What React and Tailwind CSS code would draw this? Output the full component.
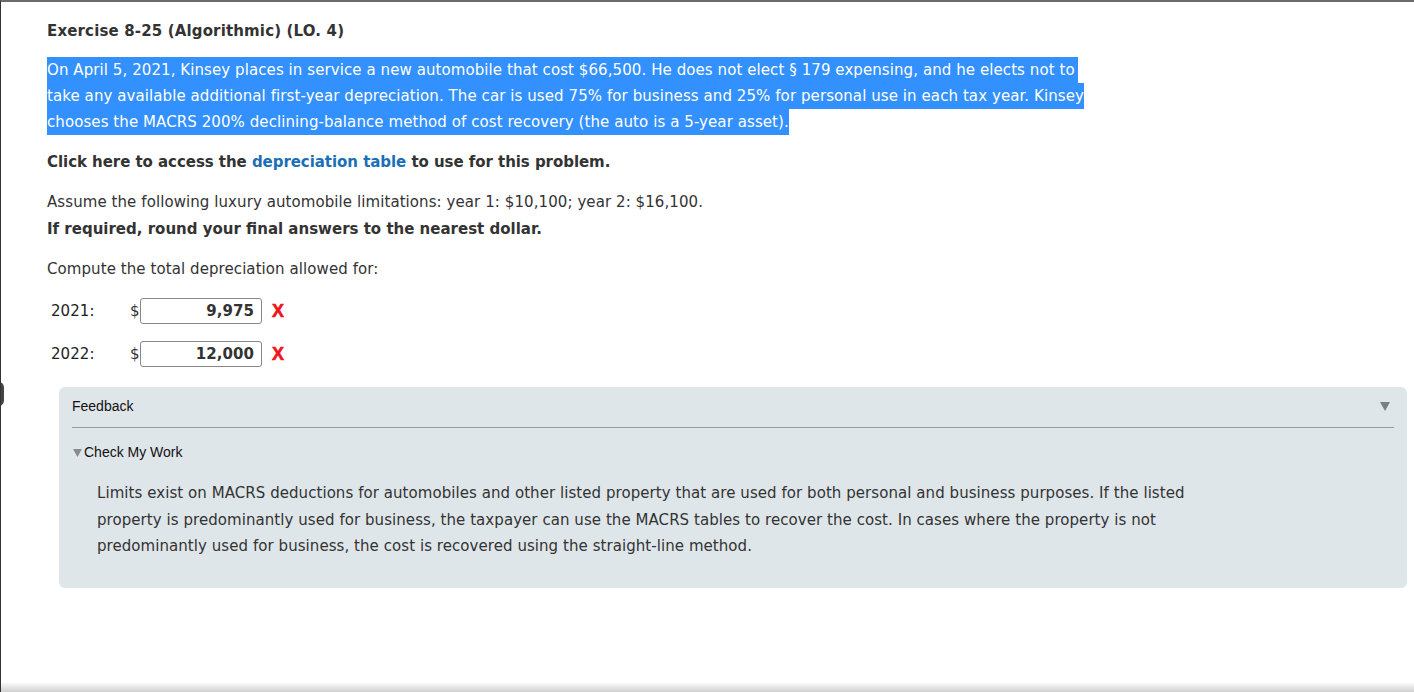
import React from "react";

const verdana = { fontFamily: '"DejaVu Sans", Verdana, sans-serif' };
const arial = { fontFamily: '"Liberation Sans", Arial, sans-serif' };

function Caret({ className }) {
  return (
    <svg viewBox="0 0 10 9" className={className}>
      <path d="M0 0 H10 L5 9 Z" fill="currentColor" />
    </svg>
  );
}

function AnswerRow({ year, value }) {
  return (
    <div className="flex items-center h-[26px]">
      <span className="w-[83px] pl-[4px] text-[15px] text-[#222]">{year}</span>
      <span className="w-[10px] text-[15px] text-[#333]">$</span>
      <div className="w-[122px] h-[26px] border border-[#888] rounded-[3px] bg-white flex items-center justify-end pr-[7px] font-bold text-[15px] text-[#333]">
        {value}
      </div>
      <span className="ml-[10px] text-[#f0141c] font-black text-[18px] leading-none [-webkit-text-stroke:0.6px_#f0141c]" style={arial}>
        X
      </span>
    </div>
  );
}

export default function App() {
  return (
    <div className="relative w-[1414px] h-[692px] bg-white overflow-hidden border-l border-[#333] border-t-2 border-t-[#6b6b6b]" style={verdana}>
      <div className="absolute left-[-8px] top-[380px] w-[11px] h-[24px] rounded-full bg-[#444]" />
      <div className="pl-[46px] pt-[16px] text-[#333] text-[15px] tracking-[0.08px]">
        <h1 className="font-bold text-[15px] leading-[26px] tracking-[0.15px]">Exercise 8-25 (Algorithmic) (LO. 4)</h1>

        <div className="mt-[13px] text-white leading-[26px]">
          <div className="w-fit bg-[#3390ff] pr-[3px]">On April 5, 2021, Kinsey places in service a new automobile that cost $66,500. He does not elect § 179 expensing, and he elects not to </div>
          <div className="w-fit bg-[#3390ff]">take any available additional first-year depreciation. The car is used 75% for business and 25% for personal use in each tax year. Kinsey</div>
          <div className="w-fit bg-[#3390ff]">chooses the MACRS 200% declining-balance method of cost recovery (the auto is a 5-year asset).</div>
        </div>

        <p className="mt-[14px] font-bold leading-[26px] tracking-[-0.05px]">
          Click here to access the <span className="text-[#1b6fb7]">depreciation table</span> to use for this problem.
        </p>

        <p className="mt-[14px] leading-[26px]">Assume the following luxury automobile limitations: year 1: $10,100; year 2: $16,100.</p>
        <p className="mt-[1px] leading-[26px] font-bold tracking-[0px]">If required, round your final answers to the nearest dollar.</p>

        <p className="mt-[14px] leading-[26px]">Compute the total depreciation allowed for:</p>

        <div className="mt-[16px] flex flex-col gap-[17px]">
          <AnswerRow year="2021:" value="9,975" />
          <AnswerRow year="2022:" value="12,000" />
        </div>
      </div>

      <div className="ml-[58px] mt-[20px] w-[1348px] h-[201px] rounded-[6px] bg-[#dfe6e9] px-[13px] pt-[11px]">
        <div className="flex items-center justify-between h-[17px] text-[14px] text-[#111]" style={arial}>
          <span>Feedback</span>
          <Caret className="mr-[4px] w-[10px] h-[9px] text-[#7a7f82]" />
        </div>
        <div className="mt-[12px] h-px bg-[#9a9a9a]" />
        <div className="mt-[14px] flex items-center text-[14px] text-[#111]" style={arial}>
          <Caret className="ml-[1px] mr-[2px] w-[9px] h-[8px] text-[#8a8a8a]" />
          <span>Check My Work</span>
        </div>
        <p className="mt-[17px] pl-[25px] pr-[200px] text-[15px] leading-[26.5px] text-[#333] tracking-[0.06px]">
          Limits exist on MACRS deductions for automobiles and other listed property that are used for both personal and business purposes. If the listed property is predominantly used for business, the taxpayer can use the MACRS tables to recover the cost. In cases where the property is not predominantly used for business, the cost is recovered using the straight-line method.
        </p>
      </div>

      <div className="absolute left-0 right-0 bottom-0 h-[10px] bg-gradient-to-b from-white to-[#cfcfcf]" />
    </div>
  );
}
